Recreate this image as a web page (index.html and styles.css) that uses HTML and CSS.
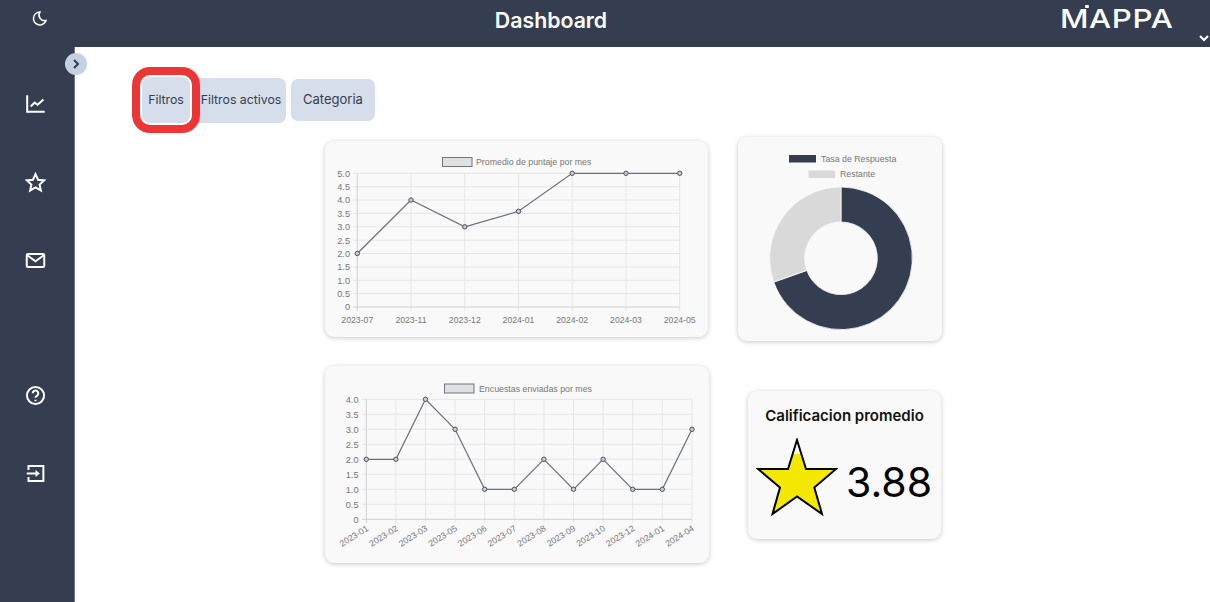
FILE: index.html
```html
<!DOCTYPE html>
<html>
<head>
    <meta charset="UTF-8">
    <meta name="viewport" content="width=device-width, initial-scale=1">
    <title>Dashboard</title>
    <link rel="stylesheet" href="styles.css">
</head>
<body>
    <!-- Barra superior -->
    <header class="topbar">
        <div class="topbar-left">
            <svg class="icon-moon" viewBox="0 0 24 24"><path d="M12.5 3a9 9 0 1 0 8.5 12 8 8 0 0 1-8.5-12z"/></svg>
        </div>
        <h1 class="topbar-title">Dashboard</h1>
        <div class="logo">M<span class="logo-dot"></span>APPA</div>
        <svg class="icon-chevron" viewBox="0 0 12 12"><path d="M2 4l4 4 4-4"/></svg>
    </header>

    <div class="layout">
        <!-- Menu lateral -->
        <nav class="sidebar">
            <button class="sidebar-toggle"><svg viewBox="0 0 12 12"><path d="M4 2l4 4-4 4"/></svg></button>
            <svg class="side-icon" viewBox="0 0 24 24"><path d="M2.500 2.500v19h20"/><path d="M6.500 15.500l4.500-4.500 3.500 2.500 6.500-6"/></svg>
            <svg class="side-icon" viewBox="0 0 24 24"><path d="M12 2.500l2.900 6.300 6.900.8-5.100 4.700 1.400 6.800-6.100-3.400-6.100 3.400 1.400-6.800-5.100-4.700 6.900-.8z"/></svg>
            <svg class="side-icon" viewBox="0 0 24 24"><rect x="2" y="4.500" width="20" height="15" rx="1.500"/><path d="M2.500 6l9.500 7 9.500-7"/></svg>
            <svg class="side-icon side-icon-help" viewBox="0 0 24 24"><circle cx="12" cy="12" r="9.800"/><path d="M8.800 9.500a3.200 3.200 0 1 1 4.800 2.800c-1 .6-1.600 1.200-1.600 2.400"/><path d="M12 16.800v1.700"/></svg>
            <svg class="side-icon" viewBox="0 0 24 24"><path d="M4 8V3.500h17v17H4V16"/><path d="M2 12h11"/><path class="solid" d="M12 8l5 4-5 4z"/></svg>
        </nav>

        <main class="content">
            <!-- Abas de filtros -->
            <div class="tabs">
                <button class="tab tab-filtros">Filtros</button>
                <button class="tab tab-activos">Filtros activos</button>
                <button class="tab tab-categoria">Categoria</button>
            </div>

            <div class="row row-first">
                <section class="card card-line">
                    <svg class="chart" viewBox="325 141 383 196">
                        <rect class="legend-box" x="442.500" y="157.500" width="29.500" height="9"/>
                        <text class="legend" x="476" y="165">Promedio de puntaje por mes</text>
                        <path class="grid" d="M353 173.300H679.700M353 186.700H679.700M353 200H679.700M353 213.400H679.700M353 226.800H679.700M353 240.200H679.700M353 253.500H679.700M353 266.900H679.700M353 280.300H679.700M353 293.600H679.700"/>
                        <path class="grid" d="M411 173.300V311M464.800 173.300V311M518.500 173.300V311M572.200 173.300V311M626 173.300V311M679.700 173.300V311"/>
                        <path class="axis" d="M357.300 173.300V311M353 307H679.700"/>
                        <g class="tick-y">
                            <text x="350" y="176.500">5.0</text>
                            <text x="350" y="190">4.5</text>
                            <text x="350" y="203.300">4.0</text>
                            <text x="350" y="216.700">3.5</text>
                            <text x="350" y="230">3.0</text>
                            <text x="350" y="243.500">2.5</text>
                            <text x="350" y="256.800">2.0</text>
                            <text x="350" y="270.200">1.5</text>
                            <text x="350" y="283.600">1.0</text>
                            <text x="350" y="296.900">0.5</text>
                            <text x="350" y="310.300">0</text>
                        </g>
                        <g class="tick-x">
                            <text x="357.300" y="323">2023-07</text>
                            <text x="411" y="323">2023-11</text>
                            <text x="464.800" y="323">2023-12</text>
                            <text x="518.500" y="323">2024-01</text>
                            <text x="572.200" y="323">2024-02</text>
                            <text x="626" y="323">2024-03</text>
                            <text x="679.700" y="323">2024-05</text>
                        </g>
                        <path class="line" d="M357.300 253.500L411 200 464.800 226.800 518.500 211.300 572.200 173.300 626 173.300 679.700 173.300"/>
                        <g class="dots">
                            <circle cx="357.300" cy="253.500" r="2.200"/>
                            <circle cx="411" cy="200" r="2.200"/>
                            <circle cx="464.800" cy="226.800" r="2.200"/>
                            <circle cx="518.500" cy="211.300" r="2.200"/>
                            <circle cx="572.200" cy="173.300" r="2.200"/>
                            <circle cx="626" cy="173.300" r="2.200"/>
                            <circle cx="679.700" cy="173.300" r="2.200"/>
                        </g>
                    </svg>
                </section>

                <section class="card card-donut">
                    <svg class="chart" viewBox="738 137 204 204">
                        <rect class="legend-dark" x="789" y="155" width="27" height="7.500"/>
                        <text class="legend" x="821" y="161.500">Tasa de Respuesta</text>
                        <rect class="legend-light" x="808.500" y="170.500" width="26.500" height="7.500"/>
                        <text class="legend" x="840" y="177">Restante</text>
                        <path class="slice-dark" d="M841 187A71.300 71.300 0 1 1 773.800 282.100L806.800 270.400A36.300 36.300 0 1 0 841 222Z"/>
                        <path class="slice-light" d="M773.800 282.100A71.300 71.300 0 0 1 841 187L841 222A36.300 36.300 0 0 0 806.800 270.400Z"/>
                    </svg>
                </section>
            </div>

            <div class="row row-second">
                <section class="card card-line-tall">
                    <svg class="chart" viewBox="325 366 384 197">
                        <rect class="legend-box" x="444.500" y="384" width="29.500" height="9"/>
                        <text class="legend" x="479" y="391.500">Encuestas enviadas por mes</text>
                        <path class="grid" d="M362 399.300H692M362 414.300H692M362 429.300H692M362 444.300H692M362 459.300H692M362 474.300H692M362 489.300H692M362 504.300H692"/>
                        <path class="grid" d="M395.900 399.300V523M425.500 399.300V523M455.100 399.300V523M484.700 399.300V523M514.300 399.300V523M543.900 399.300V523M573.500 399.300V523M603.100 399.300V523M632.700 399.300V523M662.300 399.300V523M692 399.300V523"/>
                        <path class="axis" d="M366.300 399.300V523M362 519.300H692"/>
                        <g class="tick-y">
                            <text x="358.500" y="402.500">4.0</text>
                            <text x="358.500" y="417.500">3.5</text>
                            <text x="358.500" y="432.500">3.0</text>
                            <text x="358.500" y="447.500">2.5</text>
                            <text x="358.500" y="462.500">2.0</text>
                            <text x="358.500" y="477.500">1.5</text>
                            <text x="358.500" y="492.500">1.0</text>
                            <text x="358.500" y="507.500">0.5</text>
                            <text x="358.500" y="522.500">0</text>
                        </g>
                        <g class="tick-rot">
                            <text transform="translate(369 530) rotate(-32)">2023-01</text>
                            <text transform="translate(398.600 530) rotate(-32)">2023-02</text>
                            <text transform="translate(428.200 530) rotate(-32)">2023-03</text>
                            <text transform="translate(457.800 530) rotate(-32)">2023-05</text>
                            <text transform="translate(487.400 530) rotate(-32)">2023-06</text>
                            <text transform="translate(517 530) rotate(-32)">2023-07</text>
                            <text transform="translate(546.600 530) rotate(-32)">2023-08</text>
                            <text transform="translate(576.200 530) rotate(-32)">2023-09</text>
                            <text transform="translate(605.800 530) rotate(-32)">2023-10</text>
                            <text transform="translate(635.400 530) rotate(-32)">2023-12</text>
                            <text transform="translate(665 530) rotate(-32)">2024-01</text>
                            <text transform="translate(694.700 530) rotate(-32)">2024-04</text>
                        </g>
                        <path class="line" d="M366.300 459.300L395.900 459.300 425.500 399.300 455.100 429.300 484.700 489.300 514.300 489.300 543.900 459.300 573.500 489.300 603.100 459.300 632.700 489.300 662.300 489.300 692 429.300"/>
                        <g class="dots">
                            <circle cx="366.300" cy="459.300" r="2.200"/>
                            <circle cx="395.900" cy="459.300" r="2.200"/>
                            <circle cx="425.500" cy="399.300" r="2.200"/>
                            <circle cx="455.100" cy="429.300" r="2.200"/>
                            <circle cx="484.700" cy="489.300" r="2.200"/>
                            <circle cx="514.300" cy="489.300" r="2.200"/>
                            <circle cx="543.900" cy="459.300" r="2.200"/>
                            <circle cx="573.500" cy="489.300" r="2.200"/>
                            <circle cx="603.100" cy="459.300" r="2.200"/>
                            <circle cx="632.700" cy="489.300" r="2.200"/>
                            <circle cx="662.300" cy="489.300" r="2.200"/>
                            <circle cx="692" cy="429.300" r="2.200"/>
                        </g>
                    </svg>
                </section>

                <section class="card card-rating">
                    <h3 class="rating-title">Calificacion promedio</h3>
                    <div class="rating-body">
                        <svg class="rating-star" viewBox="0 0 82 78">
                            <defs>
                                <linearGradient id="star-fill" x1="0" y1="0" x2="0" y2="1">
                                    <stop offset="0.19" stop-color="#fff"/>
                                    <stop offset="0.19" stop-color="#f5e800"/>
                                </linearGradient>
                            </defs>
                            <path d="M41 2L50 31 80 31 58.300 49.500 66 76 41 58.500 16.500 76 24 49.500 2 31 32 31Z" fill="url(#star-fill)"/>
                        </svg>
                        <span class="rating-value">3.88</span>
                    </div>
                </section>
            </div>
        </main>
    </div>
</body>
</html>
```

FILE: styles.css
```css
/* Estilos gerais */
body {
    font-family: "Inter", "Liberation Sans", sans-serif;
    background: #fff;
    margin: 0;
    padding: 0;
    height: 602px;
    overflow: hidden;
}

/* Barra superior */
.topbar {
    display: flex;
    align-items: center;
    height: 47px;
    background: #353d50;
    color: #fff;
    position: relative;
}

.topbar-left {
    width: 78px;
    display: flex;
    justify-content: center;
    margin-top: -11px;
}

.icon-moon {
    width: 17px;
    height: 17px;
    fill: none;
    stroke: #fff;
    stroke-width: 2.2;
}

.topbar-title {
    width: 946px;
    margin: -8px 0 0;
    text-align: center;
    font-size: 21.3px;
    font-weight: 600;
}

.logo {
    position: relative;
    margin: -11px 0 0 36px;
    font-size: 26px;
    font-weight: 500;
    letter-spacing: 0.5px;
    transform: scaleX(1.2);
    transform-origin: left center;
}

.logo-dot {
    position: absolute;
    left: 21px;
    top: 2px;
    width: 3px;
    height: 3px;
    background: #fff;
}

.icon-chevron {
    position: absolute;
    right: 0;
    bottom: 3px;
    width: 12px;
    height: 12px;
    fill: none;
    stroke: #fff;
    stroke-width: 2.2;
}

/* Menu lateral */
.layout {
    display: flex;
    height: 555px;
}

.sidebar {
    position: relative;
    width: 70px;
    padding: 46px 4px 0 0;
    background: #353d50;
    border-right: 1px solid #6f7889;
    display: flex;
    flex-direction: column;
    align-items: center;
    gap: 57.5px;
    flex: 0 0 auto;
    box-sizing: content-box;
}

.sidebar-toggle {
    position: absolute;
    left: 65px;
    top: 6px;
    width: 22px;
    height: 22px;
    padding: 5px;
    border: none;
    border-radius: 50%;
    background: #c5d0e2;
}

.sidebar-toggle svg {
    display: block;
    fill: none;
    stroke: #353d50;
    stroke-width: 2;
}

.side-icon {
    width: 21px;
    height: 21px;
    fill: none;
    stroke: #fff;
    stroke-width: 2.3;
}

.side-icon .solid {
    fill: #fff;
    stroke: none;
}

.side-icon-help {
    margin-top: 56px;
}

/* Conteudo */
.content {
    flex: 1;
    padding: 30px 0 0 67px;
}

.tabs {
    display: flex;
    align-items: center;
    margin-bottom: 14px;
}

.tab {
    border: none;
    border-radius: 7px;
    background: #d6deeb;
    color: #353d50;
    font-family: "Inter", "Liberation Sans", sans-serif;
    font-size: 12.3px;
    padding: 0 0 2px;
}

/* Destaque vermelho em volta do primeiro botao */
.tab-filtros {
    position: relative;
    z-index: 1;
    width: 48px;
    height: 46px;
    border-radius: 8px;
    box-shadow: 0 0 0 2px #fff, 0 0 0 10px #ee3535;
}

.tab-activos {
    width: 96px;
    height: 45px;
    padding-left: 6px;
}

.tab-categoria {
    width: 84px;
    height: 42px;
    margin-left: 5px;
    font-size: 13px;
}

.row {
    display: flex;
    align-items: center;
    margin-left: 183px;
}

.row-first {
    gap: 30px;
    margin-bottom: 25px;
}

.row-second {
    gap: 39px;
}

.card {
    background: #f9f9f9;
    border-radius: 9px;
    box-shadow: 0 1px 5px rgba(0, 0, 0, 0.22);
}

.card-line {
    width: 383px;
    height: 196px;
}

.card-donut {
    width: 204px;
    height: 204px;
}

.card-line-tall {
    width: 384px;
    height: 197px;
}

.card-rating {
    width: 193px;
    height: 148px;
    display: flex;
    flex-direction: column;
    align-items: center;
}

/* Graficos */
.chart {
    display: block;
    width: 100%;
    height: 100%;
    font-family: "Liberation Sans", Arial, sans-serif;
}

.legend {
    font-size: 8.8px;
    fill: #777;
}

.legend-box {
    fill: #e0e0e0;
    stroke: #6d7484;
    stroke-width: 1;
}

.legend-dark {
    fill: #353d50;
}

.legend-light {
    fill: #d9d9d9;
}

.grid {
    fill: none;
    stroke: #e6e6e6;
    stroke-width: 1;
}

.axis {
    fill: none;
    stroke: #d0d0d0;
    stroke-width: 1;
}

.tick-y text {
    font-size: 9.2px;
    fill: #777;
    text-anchor: end;
}

.tick-x text {
    font-size: 8.7px;
    fill: #777;
    text-anchor: middle;
}

.tick-rot text {
    font-size: 8.7px;
    fill: #777;
    text-anchor: end;
}

.line {
    fill: none;
    stroke: #6a7080;
    stroke-width: 1.2;
}

.dots circle {
    fill: #c9ccd3;
    stroke: #4b5263;
    stroke-width: 1;
}

.slice-dark {
    fill: #353d50;
    stroke: #f9f9f9;
    stroke-width: 0.8;
}

.slice-light {
    fill: #d9d9d9;
    stroke: #f9f9f9;
    stroke-width: 0.8;
}

/* Calificacion */
.rating-title {
    margin: 15px 0 0;
    font-size: 15px;
    font-weight: 600;
    color: #111;
}

.rating-body {
    display: flex;
    align-items: center;
    gap: 8px;
    margin-top: 13px;
    margin-left: -1px;
}

.rating-star {
    width: 82px;
    height: 78px;
    fill: #f5e800;
    stroke: #000;
    stroke-width: 2;
}

.rating-value {
    font-size: 41px;
    color: #000;
    margin-top: 10px;
}
```
